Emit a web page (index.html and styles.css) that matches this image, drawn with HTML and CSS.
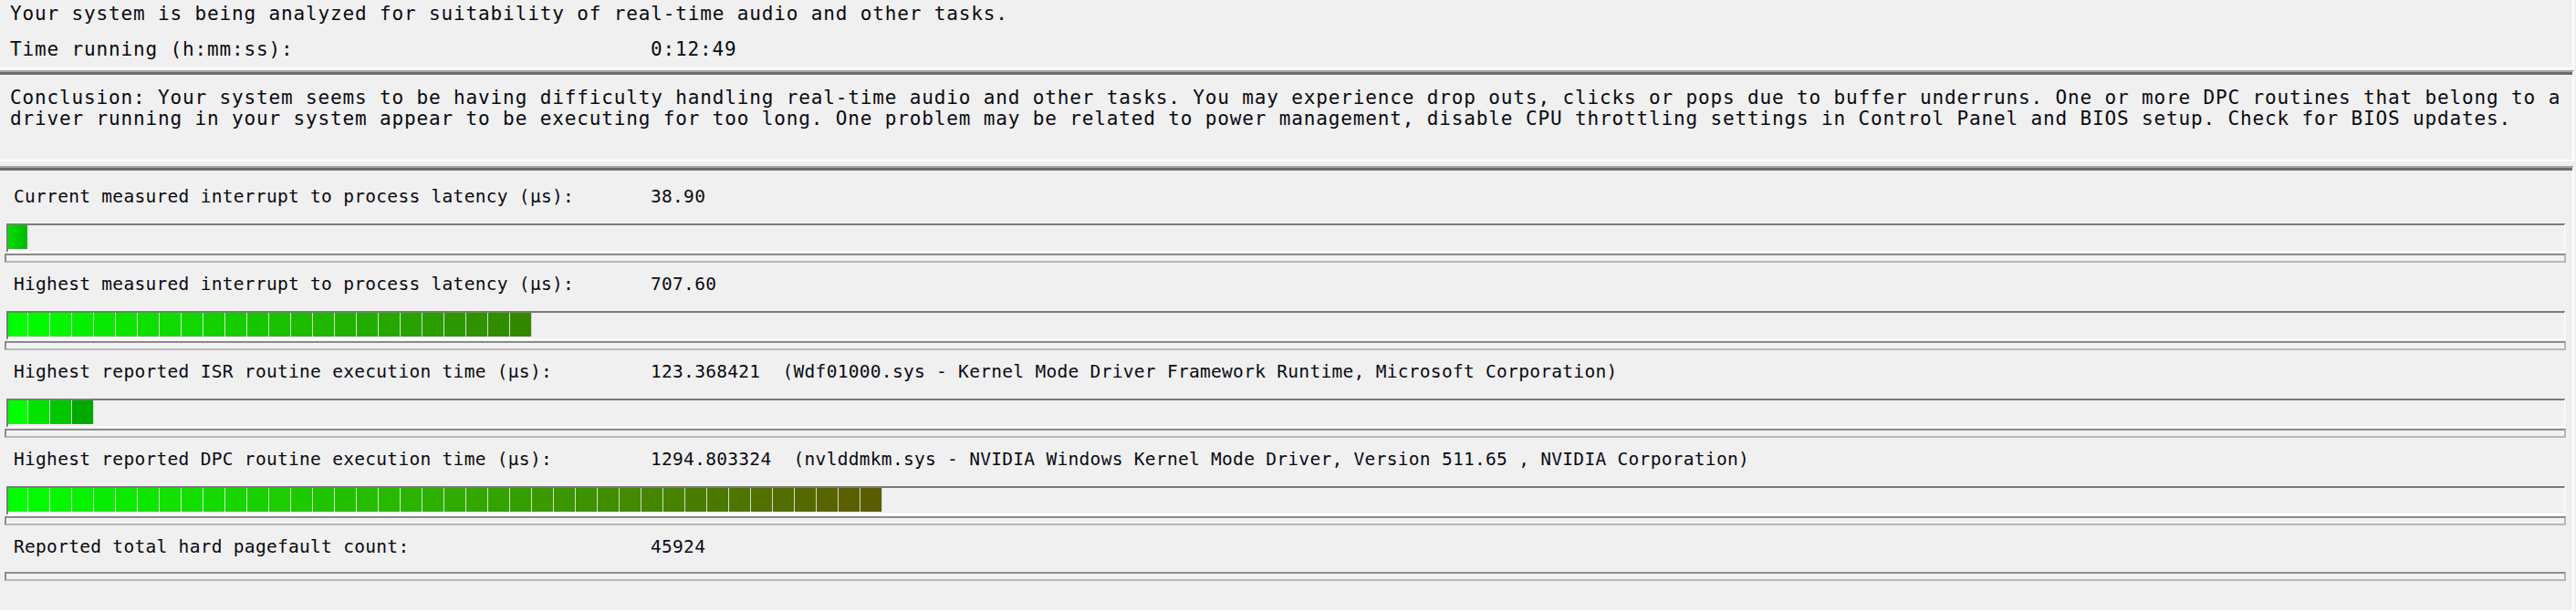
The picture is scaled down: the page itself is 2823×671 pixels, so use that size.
FILE: index.html
```html
<!DOCTYPE html>
<html lang="en">
<head>
<meta charset="utf-8">
<title>LatencyMon - Main</title>
<link rel="stylesheet" href="styles.css">
</head>
<body>
<div class="app">
  <section class="panel head">
    <div class="hline">Your system is being analyzed for suitability of real-time audio and other tasks.</div>
    <div class="hline kv"><span>Time running (h:mm:ss):</span><span>0:12:49</span></div>
  </section>

  <section class="panel concl">
    <p class="ctext"><span class="cl">Conclusion: Your system seems to be having difficulty handling real-time audio and other tasks. You may experience drop outs, clicks or pops due to buffer underruns. One or more DPC routines that belong to a</span><span class="cl">driver running in your system appear to be executing for too long. One problem may be related to power management, disable CPU throttling settings in Control Panel and BIOS setup. Check for BIOS updates.</span></p>
  </section>

  <section class="panel metrics">
    <div class="metric">
      <div class="mline"><span>Current measured interrupt to process latency (µs):</span><span class="v">38.90</span></div>
      <div class="bar"><div class="segs"><span class="seg single"></span></div></div>
      <div class="track"></div>
    </div>

    <div class="metric">
      <div class="mline"><span>Highest measured interrupt to process latency (µs):</span><span class="v">707.60</span></div>
      <div class="bar"><div class="segs">
        <span class="seg" style="background:rgb(0,255,0)"></span>
        <span class="seg" style="background:rgb(2,250,0)"></span>
        <span class="seg" style="background:rgb(4,245,0)"></span>
        <span class="seg" style="background:rgb(7,239,0)"></span>
        <span class="seg" style="background:rgb(9,234,0)"></span>
        <span class="seg" style="background:rgb(11,229,0)"></span>
        <span class="seg" style="background:rgb(13,224,0)"></span>
        <span class="seg" style="background:rgb(16,219,0)"></span>
        <span class="seg" style="background:rgb(18,214,0)"></span>
        <span class="seg" style="background:rgb(20,208,0)"></span>
        <span class="seg" style="background:rgb(22,203,0)"></span>
        <span class="seg" style="background:rgb(24,198,0)"></span>
        <span class="seg" style="background:rgb(27,193,0)"></span>
        <span class="seg" style="background:rgb(29,188,0)"></span>
        <span class="seg" style="background:rgb(31,183,0)"></span>
        <span class="seg" style="background:rgb(33,177,0)"></span>
        <span class="seg" style="background:rgb(35,172,0)"></span>
        <span class="seg" style="background:rgb(38,167,0)"></span>
        <span class="seg" style="background:rgb(40,162,0)"></span>
        <span class="seg" style="background:rgb(42,157,0)"></span>
        <span class="seg" style="background:rgb(44,151,0)"></span>
        <span class="seg" style="background:rgb(47,146,0)"></span>
        <span class="seg" style="background:rgb(49,141,0)"></span>
        <span class="seg" style="background:rgb(51,136,0)"></span>
      </div></div>
      <div class="track"></div>
    </div>

    <div class="metric">
      <div class="mline"><span>Highest reported ISR routine execution time (µs):</span><span class="v">123.368421  (Wdf01000.sys - Kernel Mode Driver Framework Runtime, Microsoft Corporation)</span></div>
      <div class="bar"><div class="segs">
        <span class="seg" style="background:rgb(0,255,0)"></span>
        <span class="seg" style="background:rgb(0,228,0)"></span>
        <span class="seg" style="background:rgb(0,200,0)"></span>
        <span class="seg" style="background:rgb(0,168,0)"></span>
      </div></div>
      <div class="track"></div>
    </div>

    <div class="metric">
      <div class="mline"><span>Highest reported DPC routine execution time (µs):</span><span class="v">1294.803324  (nvlddmkm.sys - NVIDIA Windows Kernel Mode Driver, Version 511.65 , NVIDIA Corporation)</span></div>
      <div class="bar"><div class="segs">
        <span class="seg" style="background:rgb(0,255,0)"></span>
        <span class="seg" style="background:rgb(2,251,0)"></span>
        <span class="seg" style="background:rgb(5,247,0)"></span>
        <span class="seg" style="background:rgb(7,242,0)"></span>
        <span class="seg" style="background:rgb(9,238,0)"></span>
        <span class="seg" style="background:rgb(12,234,0)"></span>
        <span class="seg" style="background:rgb(14,230,0)"></span>
        <span class="seg" style="background:rgb(17,226,0)"></span>
        <span class="seg" style="background:rgb(19,222,0)"></span>
        <span class="seg" style="background:rgb(21,217,0)"></span>
        <span class="seg" style="background:rgb(24,213,0)"></span>
        <span class="seg" style="background:rgb(26,209,0)"></span>
        <span class="seg" style="background:rgb(28,205,0)"></span>
        <span class="seg" style="background:rgb(31,201,0)"></span>
        <span class="seg" style="background:rgb(33,196,0)"></span>
        <span class="seg" style="background:rgb(35,192,0)"></span>
        <span class="seg" style="background:rgb(38,188,0)"></span>
        <span class="seg" style="background:rgb(40,184,0)"></span>
        <span class="seg" style="background:rgb(42,180,0)"></span>
        <span class="seg" style="background:rgb(45,176,0)"></span>
        <span class="seg" style="background:rgb(47,171,0)"></span>
        <span class="seg" style="background:rgb(50,167,0)"></span>
        <span class="seg" style="background:rgb(52,163,0)"></span>
        <span class="seg" style="background:rgb(54,159,0)"></span>
        <span class="seg" style="background:rgb(57,155,0)"></span>
        <span class="seg" style="background:rgb(59,150,0)"></span>
        <span class="seg" style="background:rgb(61,146,0)"></span>
        <span class="seg" style="background:rgb(64,142,0)"></span>
        <span class="seg" style="background:rgb(66,138,0)"></span>
        <span class="seg" style="background:rgb(68,134,0)"></span>
        <span class="seg" style="background:rgb(71,130,0)"></span>
        <span class="seg" style="background:rgb(73,125,0)"></span>
        <span class="seg" style="background:rgb(75,121,0)"></span>
        <span class="seg" style="background:rgb(78,117,0)"></span>
        <span class="seg" style="background:rgb(80,113,0)"></span>
        <span class="seg" style="background:rgb(83,109,0)"></span>
        <span class="seg" style="background:rgb(85,105,0)"></span>
        <span class="seg" style="background:rgb(87,100,0)"></span>
        <span class="seg" style="background:rgb(90,96,0)"></span>
        <span class="seg" style="background:rgb(92,92,0)"></span>
      </div></div>
      <div class="track"></div>
    </div>

    <div class="metric last">
      <div class="mline"><span>Reported total hard pagefault count:</span><span class="v">45924</span></div>
      <div class="track"></div>
    </div>
  </section>
</div>
</body>
</html>
```

FILE: styles.css
```css
html, body {
  margin: 0;
  padding: 0;
  background: #f0f0f0;
}

body {
  font-family: "DejaVu Sans Mono", "Liberation Mono", monospace;
  color: #0a0a12;
}

.app {
  width: 2821px;
}

.panel {
  box-sizing: border-box;
  border-right: 2px solid #ffffff;
  border-bottom: 2px solid #ffffff;
}

/* header */
.head {
  height: 76px;
  padding: 2px 0 0 11px;
}

.hline {
  font-size: 21px;
  letter-spacing: 0.86px;
  line-height: 26px;
  white-space: pre;
}

.hline + .hline {
  margin-top: 13px;
}

.kv {
  display: grid;
  grid-template-columns: 702px auto;
}

/* conclusion */
.concl {
  margin-top: 1px;
  height: 100px;
  border-top: 2px solid #a4a4a4;
  box-shadow: inset 0 3px 0 #6c6c6c;
  padding: 17px 0 0 11px;
}

.ctext {
  margin: 0;
  font-size: 21px;
  letter-spacing: 0.86px;
  line-height: 23px;
}

.cl {
  display: block;
  white-space: pre;
}

/* metrics */
.metrics {
  margin-top: 5px;
  height: 489px;
  border-top: 2px solid #a4a4a4;
  box-shadow: inset 0 3px 0 #6c6c6c;
  padding-top: 20px;
}

.metric {
  padding-bottom: 12px;
}

.mline {
  display: grid;
  grid-template-columns: 698px auto;
  padding-left: 15px;
  font-size: 19.5px;
  letter-spacing: 0.3px;
  line-height: 24px;
  white-space: pre;
}

.bar {
  box-sizing: border-box;
  margin: 17px 8px 0 7px;
  height: 32px;
  border-top: 2px solid #7a7a7a;
  border-left: 2px solid #7a7a7a;
  border-right: 1px solid #ffffff;
  border-bottom: 2px solid #ffffff;
  overflow: hidden;
}

.segs {
  display: flex;
  margin-left: -2px;
  height: 26px;
}

.seg {
  flex: none;
  box-sizing: border-box;
  width: 24px;
  height: 26px;
  border-right: 1px solid rgba(235, 240, 230, 0.85);
}

.seg.single {
  width: 23px;
  border-right: 0;
  background: linear-gradient(to right, #00e400, #00b800);
}

.track {
  box-sizing: border-box;
  margin: 1px 7px 0 5px;
  height: 10px;
  border-top: 2px solid #8c8c8c;
  border-left: 2px solid #8c8c8c;
  border-right: 2px solid #b8b8b8;
  border-bottom: 2px solid #b8b8b8;
  background: #f2f2f2;
}

.metric.last .track {
  margin-top: 15px;
}
```
